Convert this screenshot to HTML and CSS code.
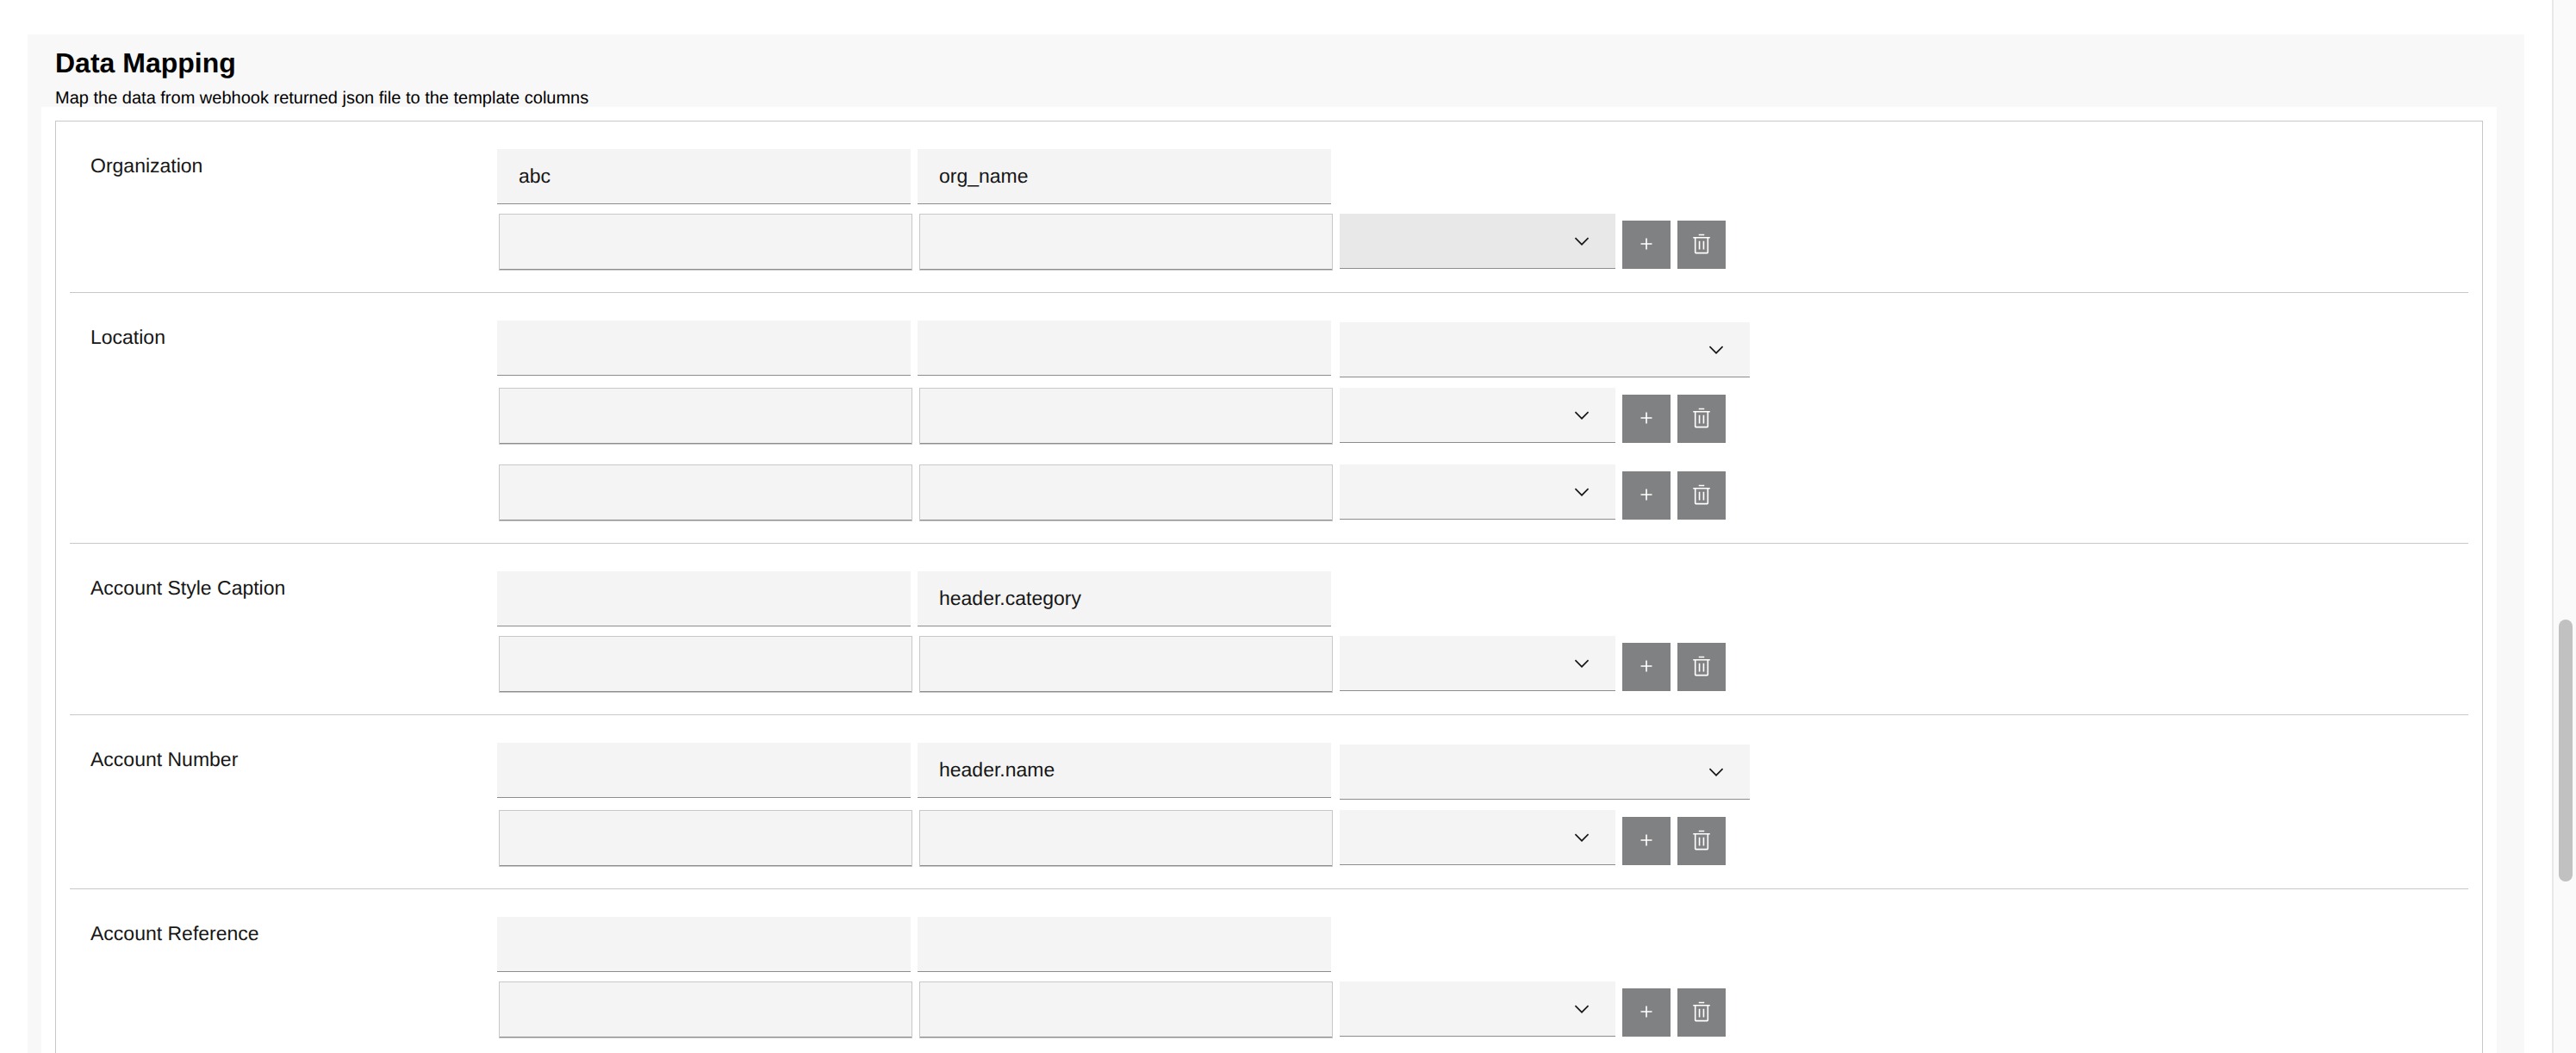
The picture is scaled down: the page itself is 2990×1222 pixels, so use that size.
FILE: index.html
```html
<!DOCTYPE html>
<html lang="en">
<head>
<meta charset="utf-8">
<title>Data Mapping</title>
<link rel="stylesheet" href="styles.css">
</head>
<body>
<svg class="sprite" aria-hidden="true">
  <symbol id="chevron" viewBox="0 0 16 16"><path d="M8 11L3 6 3.7 5.3 8 9.6 12.3 5.3 13 6z"/></symbol>
  <symbol id="add" viewBox="0 0 32 32"><path d="M17 15V8H15V15H8V17H15V24H17V17H24V15z"/></symbol>
  <symbol id="trash" viewBox="0 0 32 32"><path d="M12 12H14V24H12zM18 12H20V24H18zM12 2H20V4H12z"/><path d="M4 6V8H6V28a2 2 0 0 0 2 2H24a2 2 0 0 0 2-2V8h2V6zM8 28V8H24V28z"/></symbol>
</svg>
<div class="app">
  <main class="content">
    <section class="panel">
      <header class="panel-header">
        <h1 class="title">Data Mapping</h1>
        <p class="subtitle">Map the data from webhook returned json file to the template columns</p>
      </header>
      <form class="sheet">
        <div class="frame">

          <div class="mapping">
            <label class="name" for="organization">Organization</label>
            <div class="rows">
              <div class="row">
                <input class="field" id="organization" type="text" value="abc">
                <input class="field" type="text" value="org_name" aria-label="Organization source">
              </div>
              <div class="row extra">
                <span class="boxed"><input class="field" type="text" aria-label="Organization value"></span>
                <span class="boxed"><input class="field" type="text" aria-label="Organization path"></span>
                <span class="picker"><select class="select active" aria-label="Organization type"><option></option></select><svg class="chevron"><use href="#chevron"/></svg></span>
                <button class="action" type="button" aria-label="Add"><svg class="icon"><use href="#add"/></svg></button>
                <button class="action" type="button" aria-label="Delete"><svg class="icon"><use href="#trash"/></svg></button>
              </div>
            </div>
          </div>

          <div class="mapping">
            <label class="name" for="location">Location</label>
            <div class="rows">
              <div class="row">
                <input class="field" id="location" type="text">
                <input class="field" type="text" aria-label="Location source">
                <span class="picker wide"><select class="select" aria-label="Location format"><option></option></select><svg class="chevron"><use href="#chevron"/></svg></span>
              </div>
              <div class="row extra">
                <span class="boxed"><input class="field" type="text" aria-label="Location value"></span>
                <span class="boxed"><input class="field" type="text" aria-label="Location path"></span>
                <span class="picker"><select class="select" aria-label="Location type"><option></option></select><svg class="chevron"><use href="#chevron"/></svg></span>
                <button class="action" type="button" aria-label="Add"><svg class="icon"><use href="#add"/></svg></button>
                <button class="action" type="button" aria-label="Delete"><svg class="icon"><use href="#trash"/></svg></button>
              </div>
              <div class="row extra">
                <span class="boxed"><input class="field" type="text" aria-label="Location second value"></span>
                <span class="boxed"><input class="field" type="text" aria-label="Location second path"></span>
                <span class="picker"><select class="select" aria-label="Location second type"><option></option></select><svg class="chevron"><use href="#chevron"/></svg></span>
                <button class="action" type="button" aria-label="Add"><svg class="icon"><use href="#add"/></svg></button>
                <button class="action" type="button" aria-label="Delete"><svg class="icon"><use href="#trash"/></svg></button>
              </div>
            </div>
          </div>

          <div class="mapping">
            <label class="name" for="account-style">Account Style Caption</label>
            <div class="rows">
              <div class="row">
                <input class="field" id="account-style" type="text">
                <input class="field" type="text" value="header.category" aria-label="Account Style Caption source">
              </div>
              <div class="row extra">
                <span class="boxed"><input class="field" type="text" aria-label="Account Style Caption value"></span>
                <span class="boxed"><input class="field" type="text" aria-label="Account Style Caption path"></span>
                <span class="picker"><select class="select" aria-label="Account Style Caption type"><option></option></select><svg class="chevron"><use href="#chevron"/></svg></span>
                <button class="action" type="button" aria-label="Add"><svg class="icon"><use href="#add"/></svg></button>
                <button class="action" type="button" aria-label="Delete"><svg class="icon"><use href="#trash"/></svg></button>
              </div>
            </div>
          </div>

          <div class="mapping">
            <label class="name" for="account-number">Account Number</label>
            <div class="rows">
              <div class="row">
                <input class="field" id="account-number" type="text">
                <input class="field" type="text" value="header.name" aria-label="Account Number source">
                <span class="picker wide"><select class="select" aria-label="Account Number format"><option></option></select><svg class="chevron"><use href="#chevron"/></svg></span>
              </div>
              <div class="row extra">
                <span class="boxed"><input class="field" type="text" aria-label="Account Number value"></span>
                <span class="boxed"><input class="field" type="text" aria-label="Account Number path"></span>
                <span class="picker"><select class="select" aria-label="Account Number type"><option></option></select><svg class="chevron"><use href="#chevron"/></svg></span>
                <button class="action" type="button" aria-label="Add"><svg class="icon"><use href="#add"/></svg></button>
                <button class="action" type="button" aria-label="Delete"><svg class="icon"><use href="#trash"/></svg></button>
              </div>
            </div>
          </div>

          <div class="mapping">
            <label class="name" for="account-reference">Account Reference</label>
            <div class="rows">
              <div class="row">
                <input class="field" id="account-reference" type="text">
                <input class="field" type="text" aria-label="Account Reference source">
              </div>
              <div class="row extra">
                <span class="boxed"><input class="field" type="text" aria-label="Account Reference value"></span>
                <span class="boxed"><input class="field" type="text" aria-label="Account Reference path"></span>
                <span class="picker"><select class="select" aria-label="Account Reference type"><option></option></select><svg class="chevron"><use href="#chevron"/></svg></span>
                <button class="action" type="button" aria-label="Add"><svg class="icon"><use href="#add"/></svg></button>
                <button class="action" type="button" aria-label="Delete"><svg class="icon"><use href="#trash"/></svg></button>
              </div>
            </div>
          </div>

        </div>
      </form>
    </section>
  </main>
  <div class="scrollbar" aria-hidden="true"><div class="thumb"></div></div>
</div>
</body>
</html>
```
FILE: styles.css
```css
* {
  box-sizing: border-box;
}

body {
  margin: 0;
  background: #fff;
  color: #161616;
  font-family: "Liberation Sans", Arial, sans-serif;
  font-size: 23px;
  text-rendering: geometricPrecision;
}

.sprite {
  display: none;
}

.app {
  display: flex;
  height: 100vh;
  overflow: hidden;
}

.content {
  flex: 1;
  min-width: 0;
  padding: 40px 32px 0;
  overflow: hidden;
}

/* Panel and its heading */
.panel {
  padding: 13px 32px 32px 16px;
  background: #f8f8f8;
}

.panel-header {
  padding-left: 16px;
  color: #000;
}

.title {
  margin: 0 0 11px;
  font-size: 32px;
  line-height: 40px;
}

.subtitle {
  margin: 0;
  font-size: 20px;
  line-height: 20px;
}

.sheet {
  padding: 16px;
  background: #fff;
}

.frame {
  padding: 0 16px;
  border: 1px solid #c8c8c8;
}

/* One mapped column: name on the left, rows of controls on the right */
.mapping {
  display: grid;
  grid-template-columns: 472px 1fr;
  padding: 32px 0 25px 24px;
  border-bottom: 1px solid #c8c8c8;
}

.mapping:last-child {
  border-bottom: 0;
}

.name {
  line-height: 38px;
}

.row {
  display: flex;
  align-items: flex-start;
  gap: 8px;
}

.extra {
  margin-top: 11px;
  padding-left: 2px;
}

.extra + .extra {
  margin-top: 23px;
}

.field {
  display: block;
  width: 480px;
  height: 64px;
  margin: 0;
  padding: 0 25px;
  border: 0;
  border-bottom: 1px solid #8d8d8d;
  border-radius: 0;
  background: #f4f4f4;
  color: inherit;
  font: inherit;
  text-rendering: inherit;
}

.boxed {
  width: 480px;
  border: 1px solid #c8c8c8;
}

.boxed .field {
  width: 100%;
}

.picker {
  position: relative;
  width: 320px;
}

.wide {
  width: 478px;
  padding: 2px 0 1px 2px;
}

.select {
  display: block;
  width: 100%;
  height: 64px;
  margin: 0;
  padding: 0 64px 0 24px;
  border: 0;
  border-bottom: 1px solid #8d8d8d;
  border-radius: 0;
  appearance: none;
  background: #f4f4f4;
  color: inherit;
  font: inherit;
}

.active {
  background: #e8e8e8;
}

.chevron {
  position: absolute;
  top: 19px;
  right: 26px;
  width: 26px;
  height: 26px;
  fill: #161616;
  pointer-events: none;
}

.wide .chevron {
  top: 21px;
}

.action {
  display: flex;
  align-items: center;
  justify-content: center;
  width: 56px;
  height: 56px;
  margin: 8px 0 0;
  padding: 0 0 2px;
  border: 0;
  background: #808183;
}

.icon {
  width: 26px;
  height: 26px;
  fill: #fff;
}

/* Scroll track beside the page */
.scrollbar {
  display: grid;
  grid-template-rows: 719fr 304fr 199fr;
  width: 28px;
  padding: 0 4px 0 6px;
  border-left: 2px solid #e8e8e8;
  background: #fafafa;
}

.thumb {
  grid-row: 2;
  border-radius: 8px;
  background: #c1c1c1;
}
```
